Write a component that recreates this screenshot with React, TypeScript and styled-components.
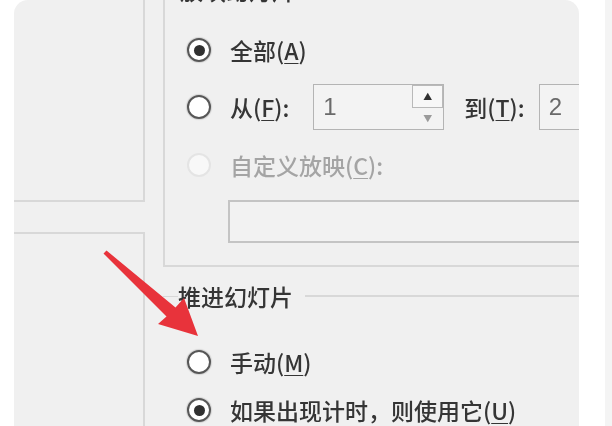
import React from 'react';
import styled, { createGlobalStyle } from 'styled-components';

const GlobalStyle = createGlobalStyle`
    html, body {
        margin: 0;
        padding: 0;
        background: #ffffff;
    }
    body {
        font-family: "Noto Sans CJK SC", "Noto Sans", sans-serif;
    }
`;

const LINE = '#d8d8d8';

const SPage = styled.div`
    width: 612px;
    height: 426px;
    display: flex;
    overflow: hidden;
`;

const SCard = styled.div`
    position: relative;
    width: 565px;
    margin-left: 14px;
    height: 100%;
    display: flex;
    background: #f0f0f0;
    border-radius: 14px 14px 0 0;
    overflow: hidden;
    filter: blur(0.55px);
`;

const SSideStrip = styled.div`
    width: 7px;
    margin-left: 26px;
    background: #f4f4f4;
`;

const SLeftColumn = styled.div`
    width: 131px;
    flex: none;
    display: flex;
    flex-direction: column;
`;

const SLeftBox = styled.div<{ $top?: boolean }>`
    border-right: 2px solid ${LINE};
    ${({ $top }) =>
        $top
            ? `height: 200px; border-bottom: 2px solid ${LINE};`
            : `flex: 1; margin-top: 30px; border-top: 2px solid ${LINE};`}
`;

const SRightColumn = styled.div`
    flex: none;
    width: 520px;
    padding-left: 18px;
    margin-top: -22px;
    display: flex;
    flex-direction: column;
`;

const SGroup = styled.div<{ $framed?: boolean }>`
    display: flex;
    flex-direction: column;
    ${({ $framed }) =>
        $framed
            ? `border-left: 2px solid ${LINE}; border-bottom: 2px solid ${LINE};`
            : `margin-top: 17px;`}
`;

const SGroupHeader = styled.div`
    height: 24px;
    display: flex;
    align-items: center;
`;

const SHeaderLead = styled.div`
    width: 15px;
    border-top: 1px solid ${LINE};
`;

const SHeaderLine = styled.div`
    flex: 1;
    margin-left: 12px;
    border-top: 2px solid ${LINE};
`;

const SHeaderText = styled.span`
    font-size: 23px;
    line-height: 24px;
    font-weight: 500;
    color: #353535;
`;

const SGroupBody = styled.div<{ $framed?: boolean }>`
    display: flex;
    flex-direction: column;
    padding-left: ${({ $framed }) => ($framed ? '22px' : '24px')};
    padding-bottom: ${({ $framed }) => ($framed ? '22px' : '0')};
`;

const SRow = styled.div<{ $gap: number; $height?: number }>`
    display: flex;
    align-items: center;
    height: ${({ $height }) => $height ?? 32}px;
    margin-top: ${({ $gap }) => $gap}px;
`;

const SRadio = styled.span<{ $checked?: boolean; $disabled?: boolean }>`
    flex: none;
    width: 24px;
    height: 24px;
    box-sizing: border-box;
    border-radius: 50%;
    border: 2px solid ${({ $disabled }) => ($disabled ? '#e4e4e4' : '#575757')};
    background: ${({ $disabled }) => ($disabled ? '#f8f8f8' : '#ffffff')};
    box-shadow: ${({ $disabled }) => ($disabled ? 'none' : '0 0 1px 1px rgba(0,0,0,0.12)')};
    display: flex;
    align-items: center;
    justify-content: center;
    margin-right: 19px;

    &::after {
        content: '';
        width: 11px;
        height: 11px;
        border-radius: 50%;
        background: #303030;
        display: ${({ $checked }) => ($checked ? 'block' : 'none')};
    }
`;

const SLabel = styled.span<{ $disabled?: boolean; $left?: number }>`
    font-size: 23px;
    line-height: 28px;
    font-weight: 500;
    margin-left: ${({ $left }) => $left ?? 0}px;
    color: ${({ $disabled }) => ($disabled ? '#a4a4a4' : '#353535')};
    white-space: nowrap;

    u {
        text-decoration-thickness: 1px;
        text-underline-offset: 3px;
    }
`;

const SSpinBox = styled.div<{ $width: number; $left: number }>`
    flex: none;
    display: flex;
    width: ${({ $width }) => $width}px;
    height: 46px;
    margin-left: ${({ $left }) => $left}px;
    box-sizing: border-box;
    border: 1px solid #b4b4b4;
    background: #f3f3f3;
`;

const SSpinValue = styled.span`
    flex: 1;
    padding-left: 9px;
    font-family: "Liberation Sans", Arial, sans-serif;
    font-size: 24px;
    line-height: 44px;
    color: #6a6a6a;
`;

const SSpinButtons = styled.div`
    width: 31px;
    display: flex;
    flex-direction: column;
`;

const SSpinButton = styled.div<{ $up?: boolean }>`
    flex: 1;
    display: flex;
    align-items: center;
    justify-content: center;
    font-size: 9px;
    color: ${({ $up }) => ($up ? '#303030' : '#9a9a9a')};
    ${({ $up }) => ($up ? 'border: 1px solid #b9b9b9; background: #f7f7f7;' : '')}
`;

const STextField = styled.div`
    height: 43px;
    margin-top: 19px;
    margin-left: 41px;
    box-sizing: border-box;
    border: 2px solid #c4c4c4;
    border-right: none;
    background: #f2f2f2;
`;

const SArrow = styled.svg`
    position: absolute;
    left: 86px;
    top: 240px;
    width: 120px;
    height: 110px;
    filter: blur(0.7px);
`;

const Key = ({ k, colon }: { k: string; colon?: boolean }) => (
    <>
        (<u>{k}</u>){colon ? ':' : ''}
    </>
);

export default function App() {
    return (
        <>
            <GlobalStyle />
            <SPage>
                <SCard>
                    <SLeftColumn>
                        <SLeftBox $top />
                        <SLeftBox />
                    </SLeftColumn>
                    <SRightColumn>
                        <SGroup $framed>
                            <SGroupHeader>
                                <SHeaderLead />
                                <SHeaderText>放映幻灯片</SHeaderText>
                                <SHeaderLine />
                            </SGroupHeader>
                            <SGroupBody $framed>
                                <SRow $gap={32}>
                                    <SRadio $checked />
                                    <SLabel>
                                        全部<Key k="A" />
                                    </SLabel>
                                </SRow>
                                <SRow $gap={18} $height={46}>
                                    <SRadio />
                                    <SLabel>
                                        从<Key k="F" colon />
                                    </SLabel>
                                    <SSpinBox $width={131} $left={24}>
                                        <SSpinValue>1</SSpinValue>
                                        <SSpinButtons>
                                            <SSpinButton $up>▲</SSpinButton>
                                            <SSpinButton>▼</SSpinButton>
                                        </SSpinButtons>
                                    </SSpinBox>
                                    <SLabel $left={20}>
                                        到<Key k="T" colon />
                                    </SLabel>
                                    <SSpinBox $width={131} $left={14}>
                                        <SSpinValue>2</SSpinValue>
                                    </SSpinBox>
                                </SRow>
                                <SRow $gap={19}>
                                    <SRadio $disabled />
                                    <SLabel $disabled>
                                        自定义放映<Key k="C" colon />
                                    </SLabel>
                                </SRow>
                                <STextField />
                            </SGroupBody>
                        </SGroup>
                        <SGroup>
                            <SGroupHeader>
                                <SHeaderLead />
                                <SHeaderText>推进幻灯片</SHeaderText>
                                <SHeaderLine />
                            </SGroupHeader>
                            <SGroupBody>
                                <SRow $gap={38}>
                                    <SRadio />
                                    <SLabel>
                                        手动<Key k="M" />
                                    </SLabel>
                                </SRow>
                                <SRow $gap={16}>
                                    <SRadio $checked />
                                    <SLabel>
                                        如果出现计时，则使用它<Key k="U" />
                                    </SLabel>
                                </SRow>
                            </SGroupBody>
                        </SGroup>
                    </SRightColumn>
                    <SArrow viewBox="100 240 120 110">
                        <polygon
                            points="106.5,250.5 103.5,253.5 166.5,316.5 158,324 198,336 184,298 175.5,307.5"
                            fill="#e8333b"
                        />
                    </SArrow>
                </SCard>
                <SSideStrip />
            </SPage>
        </>
    );
}
